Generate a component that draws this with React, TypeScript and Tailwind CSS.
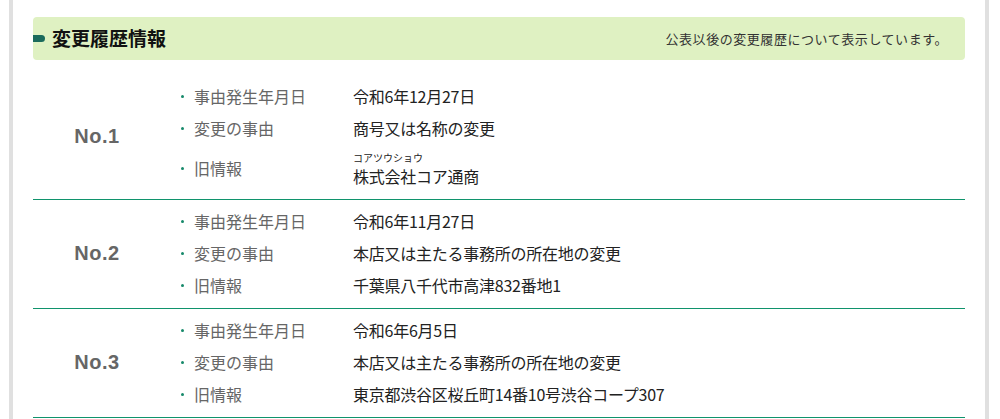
import React from "react";

type Item = { label: string; value: string; ruby?: string };
type Entry = { no: string; items: Item[] };

const entries: Entry[] = [
  {
    no: "No.1",
    items: [
      { label: "事由発生年月日", value: "令和6年12月27日" },
      { label: "変更の事由", value: "商号又は名称の変更" },
      { label: "旧情報", value: "株式会社コア通商", ruby: "コアツウショウ" },
    ],
  },
  {
    no: "No.2",
    items: [
      { label: "事由発生年月日", value: "令和6年11月27日" },
      { label: "変更の事由", value: "本店又は主たる事務所の所在地の変更" },
      { label: "旧情報", value: "千葉県八千代市高津832番地1" },
    ],
  },
  {
    no: "No.3",
    items: [
      { label: "事由発生年月日", value: "令和6年6月5日" },
      { label: "変更の事由", value: "本店又は主たる事務所の所在地の変更" },
      { label: "旧情報", value: "東京都渋谷区桜丘町14番10号渋谷コープ307" },
    ],
  },
];

const jp = "font-['Noto_Sans_CJK_JP','Noto_Sans',sans-serif]";

function Row({ item }: { item: Item }) {
  return (
    <div className={`flex items-center ${item.ruby ? "h-[48px]" : "h-[32px]"}`}>
      <div className="ml-[20px] w-[3px] h-[3px] rounded-full bg-[#16896a]" />
      <div className="ml-[10px] w-[159px] text-[16px] leading-[20px] text-[#666]">
        {item.label}
      </div>
      {item.ruby ? (
        <div className="flex flex-col">
          <span className="text-[10px] leading-[14px] text-[#222] mt-[2px]">{item.ruby}</span>
          <span className="text-[16px] leading-[22px] text-[#222] tracking-[-0.25px]">{item.value}</span>
        </div>
      ) : (
        <div className="text-[16px] leading-[20px] text-[#222] tracking-[-0.25px]">{item.value}</div>
      )}
    </div>
  );
}

export default function App() {
  return (
    <div className={`w-[1000px] h-[419px] bg-white overflow-hidden ${jp}`}>
      <div className="ml-[9px] w-[980px] h-[419px] border-l-4 border-r-4 border-[#e0e0e0] px-[20px] pt-[17px]">
        <div className="relative flex items-center justify-between h-[43px] rounded-[4px] bg-[#dff1c2] pr-[17px]">
          <div className="flex items-center">
            <div className="w-[12px] h-[7px] rounded-r-full bg-[#1b6b5c]" />
            <span className="ml-[7px] text-[19px] font-bold text-[#111] leading-[24px] -mt-[2px]">変更履歴情報</span>
          </div>
          <span className="text-[13px] text-[#333] leading-[18px] tracking-[0.55px]">公表以後の変更履歴について表示しています。</span>
        </div>
        <div className="mt-[15px]">
          {entries.map((e) => (
            <div key={e.no} className="flex border-b border-[#10936c] pt-[5px] pb-[7px]">
              <div className="w-[128px] flex items-center justify-center">
                <span className="font-['Liberation_Sans',Arial,sans-serif] font-bold text-[20px] text-[#666] tracking-[0.5px]">
                  {e.no}
                </span>
              </div>
              <div className="flex flex-col">
                {e.items.map((it) => (
                  <Row key={it.label} item={it} />
                ))}
              </div>
            </div>
          ))}
        </div>
      </div>
    </div>
  );
}
